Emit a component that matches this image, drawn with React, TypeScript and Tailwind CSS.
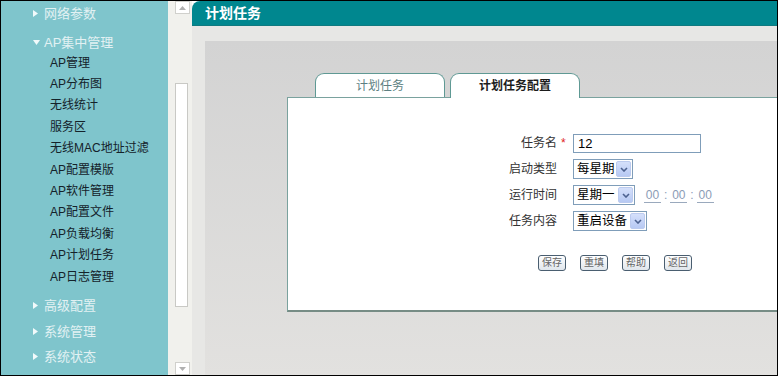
import React from "react";

function RightTri() {
  return (
    <svg width="5" height="7" viewBox="0 0 5 7" className="shrink-0">
      <polygon points="0,0 5,3.5 0,7" fill="#f2fafb" />
    </svg>
  );
}
function DownTri() {
  return (
    <svg width="7" height="5" viewBox="0 0 7 5" className="shrink-0">
      <polygon points="0,0 7,0 3.5,5" fill="#f2fafb" />
    </svg>
  );
}

function MainItem({ label, open, className }: { label: string; open?: boolean; className?: string }) {
  return (
    <div className={"h-[20px] flex items-center pl-[32px] " + (className || "")}>
      <div className="w-[11px] flex items-center">{open ? <DownTri /> : <RightTri />}</div>
      <span className="text-[13px] leading-none text-[#e2f1f3]">{label}</span>
    </div>
  );
}

const subs = [
  "AP管理",
  "AP分布图",
  "无线统计",
  "服务区",
  "无线MAC地址过滤",
  "AP配置模版",
  "AP软件管理",
  "AP配置文件",
  "AP负载均衡",
  "AP计划任务",
  "AP日志管理",
];

function Sidebar() {
  return (
    <div className="w-[167px] h-full bg-[#7fc5cc] flex flex-col pt-[2px] shrink-0">
      <MainItem label="网络参数" />
      <MainItem label="AP集中管理" open className="mt-[9px]" />
      <div className="flex flex-col">
        {subs.map((s) => (
          <div key={s} className="h-[21.4px] flex items-center pl-[49px] text-[12px] leading-none text-[#14222a]">
            {s}
          </div>
        ))}
      </div>
      <MainItem label="高级配置" className="mt-[8px]" />
      <MainItem label="系统管理" className="mt-[6px]" />
      <MainItem label="系统状态" className="mt-[5px]" />
    </div>
  );
}

function ScrollCol() {
  return (
    <div className="w-[24px] h-full bg-[#f1f1ed] flex flex-col shrink-0">
      <div className="ml-[7px] w-[15px] h-[13px] border border-[#d0d0cc] bg-white flex items-center justify-center">
        <svg width="7" height="4" viewBox="0 0 7 4">
          <polygon points="0,4 7,4 3.5,0" fill="#b0b0b0" />
        </svg>
      </div>
      <div className="ml-[7px] mt-[69px] w-[13px] h-[224px] border border-[#c9c9c5] bg-white" />
      <div className="flex-1" />
      <div className="ml-[7px] w-[15px] h-[13px] border border-[#d0d0cc] bg-white flex items-center justify-center">
        <svg width="7" height="4" viewBox="0 0 7 4">
          <polygon points="0,0 7,0 3.5,4" fill="#b0b0b0" />
        </svg>
      </div>
    </div>
  );
}

function XpSelect({ text, width }: { text: string; width: string }) {
  return (
    <div className={"h-[20px] border border-[#7f9db9] bg-white flex items-center justify-between " + width}>
      <span className="pl-[3px] text-[12.5px] leading-none text-black whitespace-nowrap">{text}</span>
      <div className="w-[15px] h-[16px] mr-[1px] shrink-0 rounded-[2px] bg-gradient-to-b from-[#d5e0fb] to-[#b7c9f3] border border-[#bccbef] flex items-center justify-center">
        <svg width="8" height="5" viewBox="0 0 8 5">
          <polyline points="1,1 4,4 7,1" fill="none" stroke="#4d6290" strokeWidth="1.6" />
        </svg>
      </div>
    </div>
  );
}

function TimeTok() {
  return (
    <span className="w-[17px] text-center text-[12px] leading-[14px] text-[#8b9cb6] border-b border-[#9aa9bd]">00</span>
  );
}

function Row({ label, star, children }: { label: string; star?: boolean; children: React.ReactNode }) {
  return (
    <div className="h-[20px] flex items-center">
      <div className="w-[70px] text-right text-[12px] leading-none text-[#333333]">{label}</div>
      <div className="w-[16px] pl-[4px] text-[12px] leading-none text-[#e02424]">{star ? "*" : ""}</div>
      {children}
    </div>
  );
}

function Btn({ t }: { t: string }) {
  return (
    <div className="w-[28px] h-[16px] border border-[#4a5e70] rounded-[3px] bg-gradient-to-b from-white to-[#e0e6ec] flex items-center justify-center text-[10px] leading-none text-[#666666]">
      {t}
    </div>
  );
}

function Main() {
  return (
    <div className="flex-1 min-w-0 h-full flex flex-col">
      <div className="h-[25px] rounded-tl-[8px] bg-[#00878f] border-b border-[#0f7a80] flex items-center pl-[13px] text-white font-bold text-[14px] leading-none shrink-0">
        计划任务
      </div>
      <div className="flex-1 bg-[#e7e7e5] pl-[13px] pt-[15px] flex min-h-0">
        <div className="flex-1 bg-gradient-to-b from-[#d3d3d3] to-[#e2e1df] overflow-hidden pl-[82px] pt-[32px]">
          <div className="flex items-end pl-[28px] gap-[5px]">
            <div className="w-[130px] h-[24px] border border-[#5f9994] border-b-0 rounded-t-[9px] bg-white flex items-center justify-center text-[12px] leading-none text-[#5d7f82]">
              计划任务
            </div>
            <div className="relative z-10 mb-[-1px] w-[130px] h-[25px] border border-[#5f9994] border-b-0 rounded-t-[9px] bg-white flex items-center justify-center text-[12px] leading-none font-bold text-[#1c1c1c]">
              计划任务配置
            </div>
          </div>
          <div className="w-[620px] h-[215px] bg-white border-l border-t border-[#7aa29e] border-b-2 border-b-[#768c85] pt-[35px] pl-[199px]">
            <div className="flex flex-col gap-[6px]">
              <Row label="任务名" star>
                <div className="w-[128px] h-[19px] border border-[#7f9db9] bg-white flex items-center pl-[4px] text-[13px] leading-none text-black">
                  12
                </div>
              </Row>
              <Row label="启动类型">
                <XpSelect text="每星期" width="w-[60px]" />
              </Row>
              <Row label="运行时间">
                <XpSelect text="星期一" width="w-[62px]" />
                <div className="ml-[9px] flex items-center">
                  <TimeTok />
                  <span className="px-[3px] text-[12px] leading-none text-[#8b9cb6]">:</span>
                  <TimeTok />
                  <span className="px-[3px] text-[12px] leading-none text-[#8b9cb6]">:</span>
                  <TimeTok />
                </div>
              </Row>
              <Row label="任务内容">
                <XpSelect text="重启设备" width="w-[74px]" />
              </Row>
            </div>
            <div className="mt-[24px] flex pl-[51px] gap-[14px]">
              <Btn t="保存" />
              <Btn t="重填" />
              <Btn t="帮助" />
              <Btn t="返回" />
            </div>
          </div>
        </div>
      </div>
    </div>
  );
}

export default function App() {
  return (
    <div className="w-[782px] h-[380px] bg-white font-['Liberation_Sans','Noto_Sans_CJK_SC',sans-serif]">
      <div className="w-[778px] h-[376px] border border-black flex overflow-hidden">
        <Sidebar />
        <ScrollCol />
        <Main />
      </div>
    </div>
  );
}
